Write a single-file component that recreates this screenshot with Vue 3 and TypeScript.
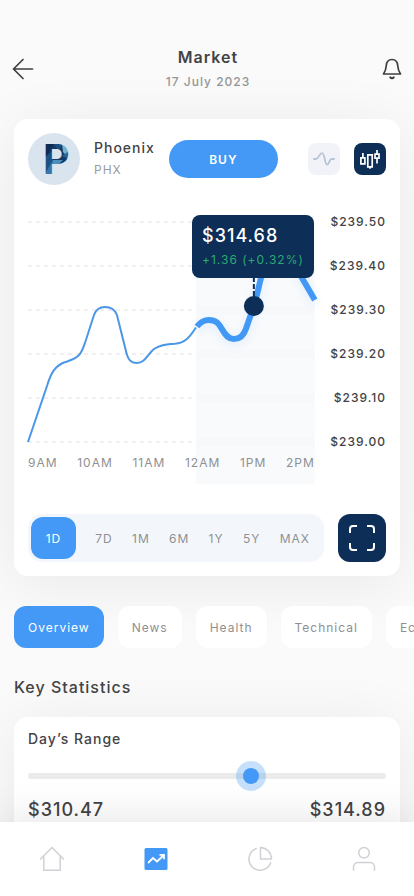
<script setup lang="ts">
import { ref } from 'vue'

const prices: string[] = ['$239.50', '$239.40', '$239.30', '$239.20', '$239.10', '$239.00']
const hours: string[] = ['9AM', '10AM', '11AM', '12AM', '1PM', '2PM']
const ranges: string[] = ['1D', '7D', '1M', '6M', '1Y', '5Y', 'MAX']
const tabs: string[] = ['Overview', 'News', 'Health', 'Technical', 'Economic']

const activeRange = ref<string>('1D')
const activeTab = ref<string>('Overview')
const chartType = ref<'line' | 'candles'>('candles')
const dayPrice = ref<number>(313.25)
const gridLines: number[] = [11, 55, 99, 143, 187, 231]
</script>

<template>
  <div class="screen">
    <main class="content">
      <header class="topbar">
        <button class="plain" type="button" aria-label="Back">
          <svg width="22" height="22" viewBox="0 0 22 22" fill="none" stroke="#3f3f3f" stroke-width="1.7" stroke-linecap="round" stroke-linejoin="round">
            <path d="M20.5 11H1.5M11 1.500L1.500 11l9.500 9.500" />
          </svg>
        </button>
        <div class="heading">
          <h1>Market</h1>
          <p>17 July 2023</p>
        </div>
        <button class="plain" type="button" aria-label="Notifications">
          <svg width="20" height="22" viewBox="0 0 20 22" fill="none" stroke="#3f3f3f" stroke-width="1.700" stroke-linecap="round" stroke-linejoin="round">
            <path d="M1.500 16h17c-1.800-2.500-2.500-4.500-2.800-8.500C15.400 3.500 13 1.500 10 1.500S4.600 3.500 4.300 7.500C4 11.500 3.300 13.500 1.500 16z" />
            <path d="M8.300 19.300c.8 1.100 2.600 1.100 3.400 0" stroke-width="2" />
          </svg>
        </button>
      </header>

      <section class="card market">
        <div class="stock">
          <svg class="logo" width="52" height="52" viewBox="0 0 52 52" role="img" aria-label="Phoenix logo">
            <defs>
              <pattern id="facets" width="52" height="52" patternUnits="userSpaceOnUse">
                <rect width="52" height="52" fill="#123a66" />
                <path d="M16 10h10l-9 16z" fill="#0c2c55" />
                <path d="M17 24l8-6v23h-8z" fill="#1b5384" />
                <path d="M17 41l8-14v14z" fill="#3577aa" />
                <path d="M25 10h10l-4 8z" fill="#1c4f7e" />
                <path d="M34 11l7 4-1 10-5-6z" fill="#78b0d0" />
                <path d="M41 18v8l-7-3z" fill="#2a6594" />
                <path d="M25 27l10 0-6 6h-4z" fill="#4b8fbd" />
              </pattern>
            </defs>
            <circle cx="26" cy="26" r="26" fill="#dae4ef" />
            <text x="15" y="41" fill="url(#facets)">P</text>
          </svg>
          <div class="name">
            <h2>Phoenix</h2>
            <p>PHX</p>
          </div>
          <button class="buy" type="button">BUY</button>
          <div class="types">
            <button type="button" aria-label="Line chart" :class="{ on: chartType === 'line' }" @click="chartType = 'line'">
              <svg width="22" height="16" viewBox="0 0 22 16" fill="none" stroke="#b9c4d4" stroke-width="1.800" stroke-linecap="round" stroke-linejoin="round">
                <path d="M.9 8H3c2.500 0 3.500-5.800 6-5.800 3 0 2.500 11.300 5 11.300S16.200 8 18.500 8h2.600" />
              </svg>
            </button>
            <button type="button" aria-label="Candlestick chart" :class="{ on: chartType === 'candles' }" @click="chartType = 'candles'">
              <svg width="20" height="20" viewBox="0 0 20 20" fill="none" stroke="#fff" stroke-width="1.700">
                <path d="M.9 8.800h4v6h-4zM2.900 8.800V4M7.800 5.800h4.400v12H7.800zM10 17.800v2M15 5.200h4v4h-4zM17 5.200V1M17 9.200V14.500" />
              </svg>
            </button>
          </div>
        </div>

        <div class="chart">
          <div class="plot">
            <svg class="graph" viewBox="0 0 287 273" preserveAspectRatio="none" role="img" aria-label="Phoenix price during the day">
              <defs>
                <filter id="glow" x="-20%" y="-20%" width="140%" height="150%">
                  <feDropShadow dx="0" dy="3" stdDeviation="4" flood-color="#4399f5" flood-opacity="0.15" />
                </filter>
              </defs>
              <g stroke="#ececec" stroke-width="1.500" stroke-dasharray="4 4">
                <path v-for="y in gridLines" :key="y" :d="`M0 ${y}H168`" />
              </g>
              <rect x="168" y="11" width="119" height="262" fill="#f9fafc" />
              <g fill="#f7f8fa">
                <rect v-for="y in gridLines.slice(2)" :key="y" x="168" :y="y - 4" width="119" height="8" />
              </g>
              <path
                d="M0 231L19 175C23 162 27 155 36 151.500C43 149 47 148.500 51 144C55 140 56 134 58 129L66 104C68 98.500 72 96 77 96C83 96 87 98.500 89 104L98 140C100 149 103 152 109 152C117 152 119 144 126 138C132 134 138 133 147 132.700C157 132 162 126 168 116.500"
                fill="none" stroke="#4a97e8" stroke-width="2" />
              <path
                d="M169 115.500C173 110.500 177 109 181 109C188 109 191 112.500 194 118C198 125 201 128 206 128C213 128 216 124 218 118L226 95C230 82 231 74 234 64C242 38 262 38 273 65L287 89"
                fill="none" stroke="#4399f5" stroke-width="6" filter="url(#glow)" />
              <path d="M226 66V90" stroke="#0c2e57" stroke-width="2" stroke-dasharray="5 2" />
              <circle cx="226" cy="95" r="10" fill="#0c2e57" />
            </svg>
            <div class="hours">
              <span v-for="h in hours" :key="h">{{ h }}</span>
            </div>
            <div class="tip">
              <strong>$314.68</strong>
              <span>+1.36 (+0.32%)</span>
            </div>
          </div>
          <div class="prices">
            <span v-for="p in prices" :key="p">{{ p }}</span>
          </div>
        </div>

        <div class="controls">
          <div class="ranges">
            <button v-for="r in ranges" :key="r" type="button" :class="{ on: r === activeRange }" @click="activeRange = r">{{ r }}</button>
          </div>
          <button class="expand" type="button" aria-label="Full screen">
            <svg width="26" height="26" viewBox="0 0 26 26" fill="none" stroke="#fff" stroke-width="2" stroke-linecap="square">
              <path d="M1 7V4a3 3 0 0 1 3-3h3M19 1h3a3 3 0 0 1 3 3v3M25 19v3a3 3 0 0 1-3 3h-3M7 25H4a3 3 0 0 1-3-3v-3" />
            </svg>
          </button>
        </div>
      </section>

      <div class="tabs">
        <button v-for="t in tabs" :key="t" type="button" :class="{ on: t === activeTab }" @click="activeTab = t">{{ t }}</button>
      </div>

      <h2 class="section-title">Key Statistics</h2>

      <section class="card stats">
        <label for="day-range">Day’s Range</label>
        <input id="day-range" v-model.number="dayPrice" type="range" min="310.47" max="314.89" step="0.01" />
        <div class="bounds">
          <span>$310.47</span>
          <span>$314.89</span>
        </div>
      </section>
    </main>

    <nav class="nav" aria-label="Main">
      <a href="#home" aria-label="Home">
        <svg width="26" height="26" viewBox="0 0 26 26" fill="none" stroke="#cfd1d5" stroke-width="1.500" stroke-linejoin="round" stroke-linecap="round">
          <path d="M1.500 13L13 1.500 24.500 13M4.800 10v14.200h16.400V10" />
        </svg>
      </a>
      <a href="#market" aria-label="Market" aria-current="page">
        <svg width="26" height="26" viewBox="0 0 26 26" fill="none" stroke="#fff" stroke-width="1.800">
          <rect x="1.500" y="2" width="23" height="22" rx="1.500" fill="#4399f5" stroke="none" />
          <path d="M5 17l5-5 4 3.500 7-6.500M16.500 8.800H21v4.500" />
        </svg>
      </a>
      <a href="#portfolio" aria-label="Portfolio">
        <svg width="26" height="26" viewBox="0 0 26 26" fill="none" stroke="#cfd1d5" stroke-width="1.500" stroke-linejoin="round" stroke-linecap="round">
          <path d="M13.500 1.500v11.500h11A11.500 11.500 0 0 0 13.500 1.500z" />
          <path d="M9.300 2.500A11.200 11.200 0 1 0 23.700 16.800" />
        </svg>
      </a>
      <a href="#profile" aria-label="Profile">
        <svg width="26" height="26" viewBox="0 0 26 26" fill="none" stroke="#cfd1d5" stroke-width="1.500" stroke-linecap="round">
          <circle cx="13" cy="6.800" r="5.300" />
          <path d="M2.500 24.200V21a4.500 4.500 0 0 1 4.500-4.500h12a4.500 4.500 0 0 1 4.500 4.500v3.200" />
        </svg>
      </a>
    </nav>
  </div>
</template>

<style>
body {
  margin: 0;
  background: #fafafa;
}
</style>

<style scoped>
.screen {
  display: flex;
  flex-direction: column;
  height: 100vh;
  overflow: hidden;
  background: #fafafa;
  color: #434345;
  font-family: Inter, 'Liberation Sans', sans-serif;
  font-size: 12px;
  letter-spacing: 1px;
}

h1,
h2,
p {
  margin: 0;
  font-weight: 500;
}

button {
  padding: 0;
  border: 0;
  background: none;
  font: inherit;
  letter-spacing: inherit;
  color: inherit;
  cursor: pointer;
}

svg {
  display: block;
}

.content {
  flex: 1;
  min-height: 0;
  overflow-y: auto;
  scrollbar-width: none;
}

.topbar {
  display: flex;
  align-items: center;
  justify-content: space-between;
  padding: 45px 12px 27px;
}

.heading {
  text-align: center;
}

.heading h1 {
  font-size: 16px;
  line-height: 24px;
  font-weight: 600;
}

.heading p {
  margin-top: 2px;
  line-height: 21px;
  color: #949597;
}

.card {
  margin: 0 14px;
  padding: 14px;
  border-radius: 14px;
  background: #fff;
  box-shadow: 0 8px 60px rgba(0, 0, 0, 0.07);
}

.stock {
  display: flex;
  align-items: center;
  gap: 14px;
}

.logo {
  flex: none;
}

.logo text {
  font-size: 41px;
  font-weight: 700;
  letter-spacing: 0;
}

.name h2 {
  font-size: 14px;
  line-height: 22px;
}

.name p {
  line-height: 22px;
  font-weight: 400;
  color: #9a9b9d;
}

.buy {
  flex: 0 1 109px;
  height: 38px;
  border-radius: 19px;
  background: #4399f5;
  color: #fff;
  font-weight: 600;
}

.types {
  display: flex;
  gap: 14px;
  margin-left: auto;
}

.types button {
  display: grid;
  place-items: center;
  width: 32px;
  height: 32px;
  border-radius: 8px;
  background: #f1f3f8;
}

.types .on {
  background: #0c2e57;
}

.chart {
  display: flex;
  justify-content: space-between;
  gap: 15px;
  margin-top: 26px;
}

.plot {
  position: relative;
  display: grid;
  flex: 1;
}

.graph {
  grid-area: 1 / 1;
  width: 100%;
  height: 273px;
  overflow: visible;
}

.hours {
  grid-area: 1 / 1;
  align-self: end;
  display: flex;
  justify-content: space-between;
  padding-bottom: 10px;
  line-height: 22px;
  color: #8f9092;
}

.tip {
  position: absolute;
  top: 4px;
  right: 1px;
  display: flex;
  flex-direction: column;
  padding: 8px 10px 7px;
  border-radius: 8px;
  background: #0c2e57;
  color: #fff;
}

.tip strong {
  font-size: 18px;
  line-height: 26px;
  font-weight: 500;
}

.tip span {
  line-height: 22px;
  color: #2aaa72;
}

.prices {
  display: flex;
  flex-direction: column;
  gap: 22px;
  line-height: 22px;
  text-align: right;
  font-weight: 500;
}

.controls {
  display: flex;
  gap: 14px;
  margin-top: 30px;
}

.ranges {
  display: flex;
  flex: 1;
  justify-content: space-between;
  padding: 3px 14px 3px 3px;
  border-radius: 14px;
  background: #f3f7fc;
  color: #8f9092;
}

.ranges .on {
  width: 45px;
  border-radius: 12px;
  background: #4399f5;
  color: #fff;
}

.expand {
  display: grid;
  place-items: center;
  width: 48px;
  height: 48px;
  border-radius: 12px;
  background: #0c2e57;
}

.tabs {
  display: flex;
  gap: 14px;
  margin-top: 30px;
  padding: 0 14px;
  overflow-x: auto;
  scrollbar-width: none;
}

.tabs button {
  flex: none;
  height: 42px;
  padding: 0 14px;
  border-radius: 12px;
  background: #fff;
  color: #8f9092;
}

.tabs .on {
  background: #4399f5;
  color: #fff;
}

.section-title {
  margin: 28px 14px 18px;
  font-size: 16px;
  line-height: 23px;
}

.stats label {
  display: block;
  font-size: 14px;
  line-height: 16px;
  font-weight: 500;
}

.stats input {
  display: block;
  width: 100%;
  height: 30px;
  margin: 14px 0 7px;
  appearance: none;
  background: none;
}

.stats input::-webkit-slider-runnable-track {
  height: 6px;
  border-radius: 3px;
  background: #ebebeb;
}

.stats input::-webkit-slider-thumb {
  width: 16px;
  height: 16px;
  margin-top: -5px;
  appearance: none;
  border-radius: 50%;
  background: #4399f5;
  box-shadow: 0 0 0 7px rgba(67, 153, 245, 0.3);
}

.bounds {
  display: flex;
  justify-content: space-between;
  padding-bottom: 14px;
  font-size: 18px;
  line-height: 24px;
  font-weight: 500;
}

.nav {
  position: relative;
  display: flex;
  align-items: center;
  justify-content: space-between;
  height: 74px;
  padding: 0 37px 0 39px;
  background: #fff;
  box-shadow: 0 -4px 40px rgba(0, 0, 0, 0.1);
}
</style>
